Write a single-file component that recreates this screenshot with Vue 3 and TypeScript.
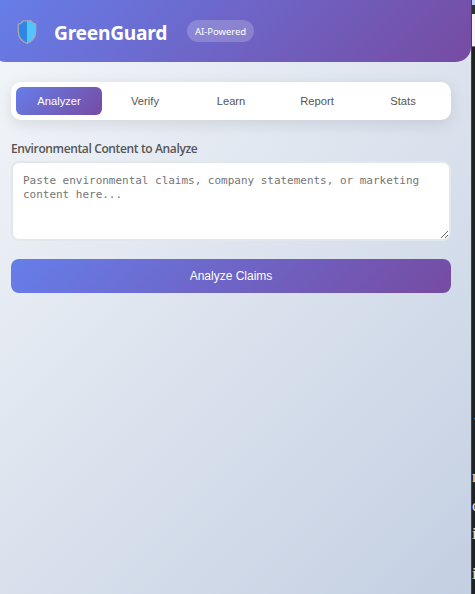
<script setup lang="ts">
import { ref } from 'vue'

const tabs: string[] = ['Analyzer', 'Verify', 'Learn', 'Report', 'Stats']
const activeTab = ref<string>('Analyzer')
const content = ref<string>('')
</script>

<template>
  <div class="window">
    <main class="popup">
      <header class="header">
        <svg class="shield" viewBox="0 0 20 24" aria-hidden="true">
          <path d="M6 .8h8c.7 1.8 2.200 3 4.700 3.400v7.300c0 5.600-3 9.600-8.700 11.800C4.300 21.100 1.300 17.100 1.300 11.500V4.200C3.800 3.800 5.300 2.600 6 .8z" fill="#2f86e4" />
          <path d="M10 .8h4c.7 1.800 2.200 3 4.700 3.400v7.300c0 5.600-3 9.600-8.700 11.800z" fill="#50c5ff" />
          <path d="M6 .8h8c.7 1.800 2.200 3 4.700 3.400v7.300c0 5.600-3 9.600-8.700 11.800C4.300 21.100 1.300 17.100 1.300 11.500V4.200C3.800 3.800 5.300 2.600 6 .8z" fill="none" stroke="#aaa5b0" stroke-width="1.3" />
        </svg>
        <h1 class="title">GreenGuard</h1>
        <span class="badge">AI-Powered</span>
      </header>
      <div class="body">
        <nav class="tabs">
          <button
            v-for="tab in tabs"
            :key="tab"
            class="tab"
            :class="{ active: tab === activeTab }"
            @click="activeTab = tab"
          >{{ tab }}</button>
        </nav>
        <label class="label" for="claims">Environmental Content to Analyze</label>
        <textarea
          id="claims"
          v-model="content"
          class="input"
          placeholder="Paste environmental claims, company statements, or marketing content here..."
        ></textarea>
        <button class="submit">Analyze Claims</button>
      </div>
    </main>
    <aside class="backdrop">
      <div class="sky"></div>
      <div class="bar"></div>
      <div class="field"></div>
      <div class="article">
        <span class="dash">-</span>
        <span class="line">n</span>
        <span>c</span>
        <span>i</span>
        <span class="last">i</span>
      </div>
    </aside>
  </div>
</template>

<style>
body {
  overflow: hidden;
}
</style>

<style scoped>
.window {
  display: flex;
  width: 475px;
  height: 594px;
  overflow: hidden;
  background: #202322;
  font-family: "Noto Sans", "Open Sans", sans-serif;
}
.popup {
  flex: 0 0 480px;
  height: 594px;
  margin-left: -9px;
  background: linear-gradient(135deg, #f5f7fa 0%, #c3cfe2 100%);
}
.header {
  display: flex;
  align-items: center;
  box-sizing: border-box;
  height: 62px;
  padding: 0 26px;
  border-radius: 0 0 15px 15px;
  background: linear-gradient(135deg, #667eea 0%, #764ba2 100%);
  color: #fff;
}
.shield {
  width: 20px;
  height: 24px;
  margin-top: 2px;
}
.title {
  margin: 4px 0 0 17px;
  width: 113px;
  font: 700 19.2px/26px "Noto Sans", sans-serif;
  letter-spacing: -0.25px;
  white-space: nowrap;
}
.badge {
  box-sizing: border-box;
  width: 67px;
  height: 22px;
  margin-left: 20px;
  border-radius: 11px;
  background: rgba(255, 255, 255, 0.2);
  font-size: 9.6px;
  letter-spacing: -0.08px;
  line-height: 23px;
  text-align: center;
  white-space: nowrap;
}
.body {
  display: flex;
  flex-direction: column;
  padding: 20px;
}
.tabs {
  display: flex;
  box-sizing: border-box;
  height: 38px;
  padding: 5px;
  border-radius: 10px;
  background: #fff;
  box-shadow: 0 4px 15px rgba(0, 0, 0, 0.1);
}
.tab {
  flex: 1;
  padding: 0;
  border: 0;
  border-radius: 6px;
  background: transparent;
  color: #555;
  font: 500 11.2px/28px "Liberation Sans", Arial, sans-serif;
}
.tab.active {
  background: linear-gradient(135deg, #667eea 0%, #764ba2 100%);
  color: #fff;
}
.label {
  height: 18px;
  margin: 20px 0 3px;
  color: #555;
  font: 600 12px/18px "Open Sans", sans-serif;
  letter-spacing: -0.37px;
}
.input {
  box-sizing: border-box;
  width: 440px;
  height: 80px;
  padding: 11px 10px 9px;
  border: 2px solid #e1e8ed;
  border-radius: 8px;
  background: #fff;
  font: 11px/14px "DejaVu Sans Mono", monospace;
  letter-spacing: -0.02px;
  resize: vertical;
}
.input::placeholder {
  color: #757575;
}
.submit {
  height: 34px;
  margin-top: 18px;
  padding: 0;
  border: 0;
  border-radius: 8px;
  background: linear-gradient(135deg, #667eea 0%, #764ba2 100%);
  color: #fff;
  font: 500 12px/34px "Liberation Sans", Arial, sans-serif;
}
.backdrop {
  box-sizing: border-box;
  flex: 0 0 4px;
  overflow: hidden;
  border-left: 1px solid #39434b;
}
.sky {
  height: 5px;
  background: #b9d0f2;
}
.bar {
  height: 9px;
  background: #303331;
}
.field {
  height: 32px;
  background: #f7f5f3;
  border-bottom: 1px solid #777;
}
.article {
  padding-top: 357px;
  color: #e8e6e3;
  font: 17px/28px "Liberation Serif", serif;
}
.article span {
  display: block;
}
.article .dash {
  padding-left: 2px;
}
.article .line {
  margin: 31px 0 1px;
}
.article .last {
  margin-top: 12px;
}
</style>
